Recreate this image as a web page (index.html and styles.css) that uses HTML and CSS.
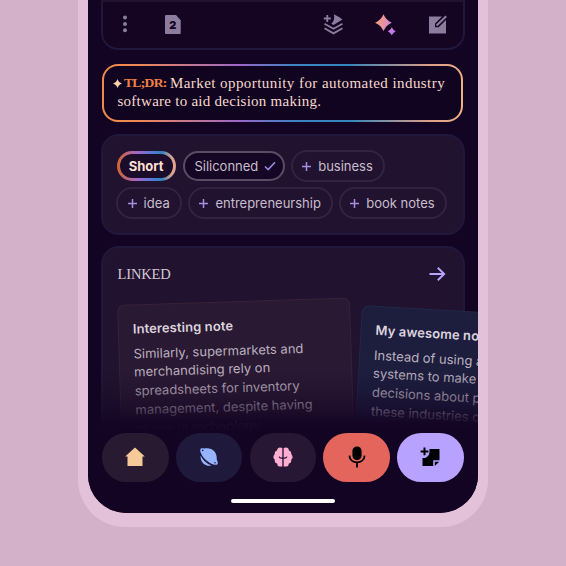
FILE: index.html
```html
<!DOCTYPE html>
<html lang="en">
<head>
<meta charset="utf-8">
<title>Notes</title>
<link rel="stylesheet" href="styles.css">
</head>
<body>
<svg class="defs" width="0" height="0"><symbol id="plus" viewBox="0 0 9 9"><path d="M4.5 0v9M0 4.5h9"/></symbol></svg>
<div class="phone">
  <main class="screen">
    <section class="toolbar">
      <svg class="dots" width="6" height="18" viewBox="0 0 6 18"><circle cx="3" cy="2.5" r="2"/><circle cx="3" cy="9" r="2"/><circle cx="3" cy="15.3" r="2"/></svg>
      <span class="count">2</span>
      <svg class="layers" width="21" height="21" viewBox="0 0 21 21"><path class="fill" d="M10.8.2Q15 2 19.5 5.6L10.5 10.9 8.3 9.7Q12.3 6 10.8.2Z"/><path d="M4.3 1v7M.8 4.5h7M1.5 9.7l9 5 9-5M1.5 14.2l9 5.2 9-5.2"/></svg>
      <svg class="sparkle" width="21" height="22" viewBox="0 0 21 22">
        <defs><linearGradient id="spark" x1="0" y1="0" x2="21" y2="5" gradientUnits="userSpaceOnUse"><stop offset="0" stop-color="#fba46a"/><stop offset=".5" stop-color="#e792a5"/><stop offset="1" stop-color="#bd78ef"/></linearGradient></defs>
        <path fill="url(#spark)" d="M8.5.3Q11 6.2 16.8 8.7 11 11.2 8.5 17.1 6 11.2.1 8.7 6 6.2 8.5.3ZM16.8 13.2Q18.1 16 20.7 17.3 18.1 18.6 16.8 21.2 15.5 18.6 12.8 17.3 15.5 16 16.8 13.2Z"/>
      </svg>
      <svg class="edit" width="18" height="19" viewBox="0 0 18 19"><path fill="#8c7d9e" d="M0 1.5H13L6 8.5V12.2H9.7L17 5V18.5H0Z"/><path d="M17.2 1.2 7.6 10.6" stroke="#8c7d9e" stroke-width="2.1"/></svg>
    </section>

    <section class="summary">
      <p><svg class="star" width="9" height="9" viewBox="0 0 9 9"><path d="M4.5 0Q5.5 3.5 9 4.5 5.5 5.5 4.5 9 3.5 5.5 0 4.5 3.5 3.5 4.5 0Z"/></svg><b>TL;DR:</b> <span class="first">Market opportunity for automated industry</span></p>
      <p class="second">software to aid decision making.</p>
    </section>

    <section class="card tags">
      <div class="tag-row">
        <span class="tag short">Short</span>
        <span class="tag chosen">Siliconned<svg width="12" height="10" viewBox="0 0 12 10"><path d="m1 5.5 3.2 3L11 1.2"/></svg></span>
        <span class="tag business"><svg class="plus"><use href="#plus"/></svg>business</span>
      </div>
      <div class="tag-row">
        <span class="tag idea"><svg class="plus"><use href="#plus"/></svg>idea</span>
        <span class="tag entre"><svg class="plus"><use href="#plus"/></svg>entrepreneurship</span>
        <span class="tag book"><svg class="plus"><use href="#plus"/></svg>book notes</span>
      </div>
    </section>

    <section class="card linked">
      <header><h2>LINKED</h2><svg width="17" height="14" viewBox="0 0 17 14"><path d="M.5 7h14.6M8.8.8 15.2 7 8.8 13.2"/></svg></header>
      <div class="notes">
        <article class="note plum"><h3>Interesting note</h3><p>Similarly, supermarkets and<br>merchandising rely on<br>spreadsheets for inventory<br>management, despite having<br>to use in technology</p></article>
        <article class="note navy"><h3>My awesome note</h3><p>Instead of using a<br>systems to make<br>decisions about p<br>these industries o</p></article>
      </div>
    </section>

    <nav class="dock">
      <div class="dock-row">
        <a class="home"><svg width="20" height="20" viewBox="0 0 20 20"><path fill="#f5ca98" d="M10 .5 19.8 9.5H17.5V19H2.5V9.5H.2Z"/></svg></a>
        <a class="planet"><svg width="20" height="20" viewBox="0 0 20 20"><path fill="#96b3ff" d="M1.4 4.8C.7 1.4 2 .6 5.5 1.6 11.8-.3 18.5 4.4 17.7 12.4 20 17 18.6 18.7 14.5 17.5 9.5 16 3 10.5 1.4 4.8ZM1.6 8.8C4 13.4 8 17 12.4 18.5 6 19.8 1.1 14.8 1.6 8.8Z"/><circle cx="3.7" cy="3.4" r=".8" fill="#1f193f"/><circle cx="16" cy="15.8" r=".8" fill="#1f193f"/></svg></a>
        <a class="brain"><svg width="20" height="20" viewBox="0 0 20 20"><path fill="#ffadd2" d="M9.3 1v18.4H6.6Q4.2 19.2 4.1 16.4 1.3 16 1.8 12.7-1 10 1.8 7.1 1.2 4.2 4 3.5 4.4.5 7 .5ZM10.7 1v18.4h2.7q2.4-.2 2.5-3 2.8-.4 2.3-3.7 2.8-2.7 0-5.6.6-2.9-2.2-3.6Q15.6.5 13 .5Z"/><path d="M6.2 9.6q.3 1.8 3.1 1.5h1.4q2.8.3 3.1-1.5" fill="none" stroke="#28142f" stroke-width="1.3"/></svg></a>
        <a class="voice"><svg width="18" height="22" viewBox="0 0 18 22"><rect x="4.4" y=".5" width="9.2" height="13.6" rx="4.6"/><path d="M1.4 9.6c.5 9 14.7 9 15.2 0M9 16v5.5" fill="none" stroke="#000" stroke-width="1.8"/></svg></a>
        <a class="create"><svg width="20" height="20" viewBox="0 0 20 20"><path d="M2.5 11H5Q9.2 9.6 9.5 5V2H19.5V13.3H13.2V19H2.5ZM14.8 19v-4.2h4.3Z"/><path d="M4.5.5v7.8M.6 4.4h7.8" stroke="#000" stroke-width="2"/></svg></a>
      </div>
      <div class="handle"></div>
    </nav>
  </main>
</div>
</body>
</html>
```
FILE: styles.css
```css
* { box-sizing: border-box; }
html, body { height: 100%; overflow: hidden; }
body { margin: 0; background: #d2b1c9; font-family: Inter, sans-serif; }
h2, h3, p { margin: 0; }
svg { display: block; flex: none; }
.phone { width: 409.5px; height: 527px; margin-left: 78px; padding: 0 9.3px 14px 9.5px; background: #e3c2d9; border-radius: 0 0 47px 47px; }
.screen { position: relative; height: 513px; padding: 0 13px; overflow: hidden; background: #140424; border-radius: 0 0 38px 38px; }
.toolbar { display: flex; align-items: flex-start; height: 50px; padding: 0 16px 0 20px; background: #150522; border: 2px solid #20183b; border-top: 2px solid #211330; border-radius: 0 0 17px 17px; }
.toolbar > * { margin-top: 13px; }
.dots { margin-left: -1px; fill: #8c7d9e; }
.count { width: 16px; height: 19px; margin-left: 37.5px; background: #8c7d9e; border-radius: 1px; clip-path: polygon(0 0, 70% 0, 100% 27%, 100% 100%, 0 100%); color: #150522; font-size: 11px; font-weight: 900; line-height: 20px; text-align: center; }
.layers { margin-left: 142.5px; margin-top: 12px; fill: none; stroke: #8c7d9e; stroke-width: 1.8; }
.layers .fill { fill: #8c7d9e; stroke: none; }
.sparkle { margin-left: 31px; margin-top: 12px; }
.edit { margin-left: 33px; fill: none; }
.summary { height: 58px; margin: 14px 2px 0 1.5px; padding: 8px 9px 0; border: 2px solid transparent; border-radius: 16px; background: linear-gradient(#100421, #100421) padding-box, linear-gradient(90deg, #f08a49 0, #ef8955 10%, #9a68c8 38%, #3e83c5 53%, #3286bd 68%, #d99d88 90%, #f2ae85) border-box; color: #f6d9cc; font-family: "Liberation Serif", serif; font-size: 15px; line-height: 18px; white-space: nowrap; }
.summary p { display: flex; align-items: center; }
.star { margin-right: 2px; fill: #ffd0a9; }
.summary b { width: 43px; margin-right: 3px; color: #f18042; font-size: 13.5px; letter-spacing: -.65px; }
.first { letter-spacing: .43px; }
.summary .second { padding-left: 4.5px; letter-spacing: .26px; }
.card { border: 2px solid #20173a; border-radius: 18px; background: #211230; }
.tags { height: 101px; margin-top: 12px; padding: 14px 14px 0 13.6px; }
.tag-row { display: flex; height: 32px; gap: 5.8px; margin-bottom: 5px; }
.tag { display: flex; align-items: center; height: 32px; border: 2px solid #322440; border-radius: 16px; color: #c8becc; font-size: 13px; white-space: nowrap; padding-left: 9.5px; }
.plus { width: 9px; height: 9px; margin-right: 7px; overflow: visible; stroke: #a98ee0; stroke-width: 1.5; }
.short { width: 59px; height: 30px; margin: 1px 1.5px 0 .5px; padding: 0; justify-content: center; border: 3px solid transparent; background: linear-gradient(#1b0d29, #1b0d29) padding-box, linear-gradient(90deg, #cf672e, #a865c5 33%, #517bd7 60%, #2f83bd 76%, #e0a48c 93%) border-box; color: #ffdfcf; font-weight: 700; }
.chosen { width: 102px; height: 30px; margin-top: 1px; border: 2px solid #5a4c64; background: #150625; padding-left: 9.5px; }
.chosen svg { margin-left: 5.5px; fill: none; stroke: #9c87e3; stroke-width: 1.6; }
.business { width: 94px; }
.idea { width: 66px; }
.entre { width: 145px; }
.book { width: 108px; }
.linked { height: 260px; margin-top: 11px; padding: 17px 16px 0 15px; }
.linked header { display: flex; justify-content: space-between; align-items: center; height: 18px; padding-right: 1.5px; }
.linked h2 { color: #d3c9d3; font: 400 14.5px/18px "Liberation Serif", serif; letter-spacing: -.15px; }
.linked header svg { fill: none; stroke: #b8a4ff; stroke-width: 1.9; }
.notes { display: flex; gap: 11.5px; margin: 21.5px 0 0 -.5px; }
.note { flex: none; width: 233px; height: 190px; padding: 12.5px 14px; border: 1px solid #382238; border-radius: 7px; background: #2a1933; transform-origin: 0 0; color: #bbb0bf; font-size: 13px; line-height: 18.8px; white-space: nowrap; }
.note h3 { margin-bottom: 6px; color: #dcd3dd; font-size: 13px; font-weight: 600; line-height: 20px; letter-spacing: .1px; }
.plum { transform: rotate(-1.85deg); }
.navy { border-color: #212944; background: #1d1e3e; transform: rotate(3.3deg); }
.dock { position: absolute; inset: auto 0 0; height: 150px; padding: 70px 14.5px 0 14.5px; background: linear-gradient(rgba(20,4,36,0) 5%, rgba(20,4,36,.25) 20%, rgba(20,4,36,.6) 32%, rgba(20,4,36,.95) 40%, #140424 46%); }
.dock-row { display: flex; justify-content: space-between; }
.dock a { display: flex; width: 66.6px; height: 48.6px; align-items: center; justify-content: center; border-radius: 24.3px; }
.home { background: #281a31; }
.planet { background: #1f193c; }
.brain { background: #281635; }
.voice { background: #e3655b; }
.create { background: #b7a3ff; }
.handle { width: 104px; height: 4px; margin: 17.5px auto 0; background: #fff; border-radius: 2px; }
```
